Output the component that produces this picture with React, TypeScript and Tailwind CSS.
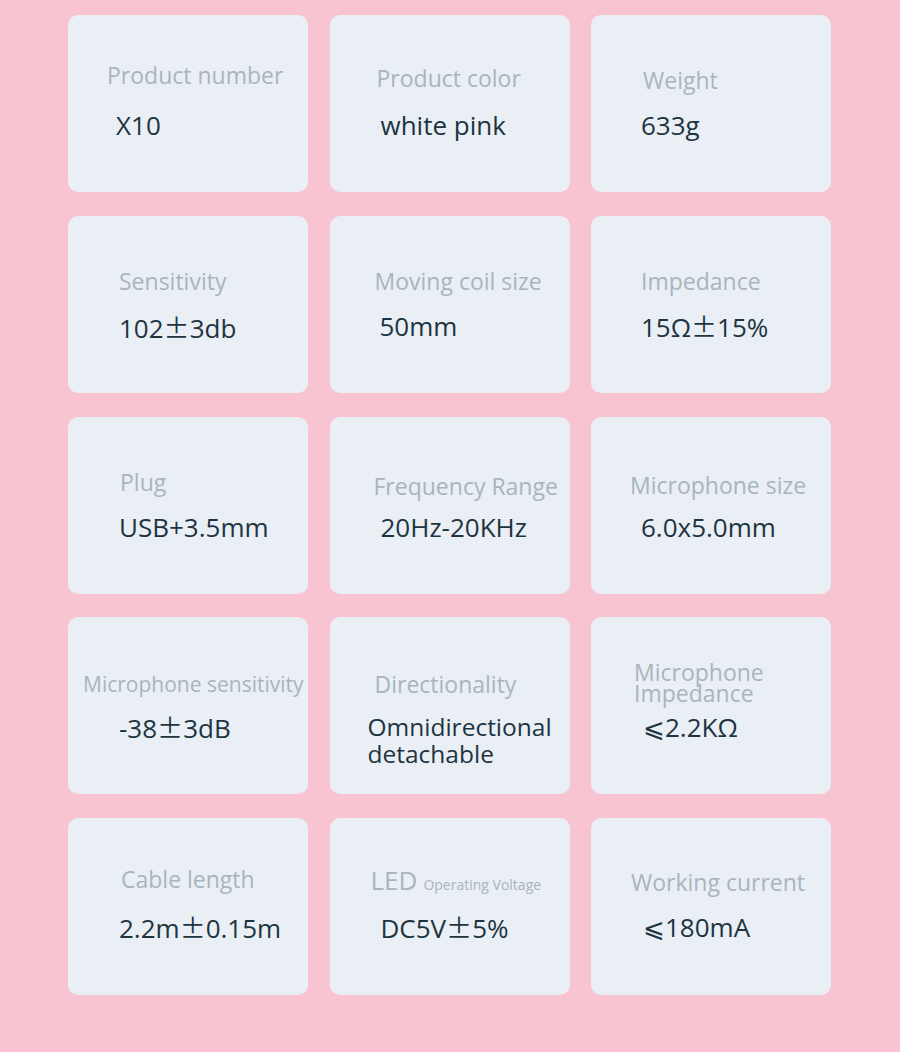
import React from 'react';

type Spec = {
  label: React.ReactNode;
  value: React.ReactNode;
  card: string;
  labelCls: string;
  valueCls: string;
};

const PM = () => <span className="font-['Noto_Sans_CJK_SC',sans-serif] font-normal">±</span>;

const L = 'text-[23px] leading-[26px]';
const V = 'leading-[30px]';

const specs: Spec[] = [
  { label: 'Product number', value: 'X10', card: 'pt-[47px] pl-[39px]', labelCls: L, valueCls: `${V} mt-[22px] ml-[9px]` },
  { label: 'Product color', value: 'white pink', card: 'pt-[50px] pl-[47px]', labelCls: L, valueCls: `${V} mt-[19px] ml-[4px]` },
  { label: 'Weight', value: '633g', card: 'pt-[52px] pl-[52px]', labelCls: L, valueCls: `${V} mt-[17px] ml-[-2px]` },

  { label: 'Sensitivity', value: <>102<PM />3db</>, card: 'pt-[52px] pl-[51px]', labelCls: L, valueCls: `${V} mt-[18px] ml-0` },
  { label: 'Moving coil size', value: '50mm', card: 'pt-[52px] pl-[45px]', labelCls: L, valueCls: `${V} mt-[17px] ml-[5px]` },
  { label: 'Impedance', value: <>15Ω<PM />15%</>, card: 'pt-[52px] pl-[50px]', labelCls: L, valueCls: `${V} mt-[17px] ml-0` },

  { label: 'Plug', value: 'USB+3.5mm', card: 'pt-[52px] pl-[52px]', labelCls: L, valueCls: `${V} mt-[17px] ml-[-1px]` },
  { label: 'Frequency Range', value: '20Hz-20KHz', card: 'pt-[56px] pl-[44px]', labelCls: L, valueCls: `${V} mt-[13px] ml-[7px]` },
  { label: 'Microphone size', value: '6.0x5.0mm', card: 'pt-[55px] pl-[39px]', labelCls: L, valueCls: `${V} mt-[14px] ml-[11px]` },

  { label: 'Microphone sensitivity', value: <>-38<PM />3dB</>, card: 'pt-[54px] pl-[15px]', labelCls: 'text-[21px] leading-[26px]', valueCls: `${V} mt-[15px] ml-[36px]` },
  {
    label: 'Directionality',
    value: <>Omnidirectional<br />detachable</>,
    card: 'pt-[54px] pl-[45px]',
    labelCls: L,
    valueCls: 'leading-[27px] !text-[24.5px] mt-[16px] ml-[-7px]',
  },
  {
    label: <>Microphone<br />Impedance</>,
    value: '⩽2.2KΩ',
    card: 'pt-[45px] pl-[43px]',
    labelCls: 'text-[23px] leading-[21px]',
    valueCls: `${V} mt-[8px] ml-[9px]`,
  },

  { label: 'Cable length', value: <>2.2m<PM />0.15m</>, card: 'pt-[48px] pl-[53px]', labelCls: L, valueCls: `${V} mt-[20px] ml-[-2px]` },
  {
    label: (
      <>
        <span className="text-[26px]">LED</span>
        <span className="ml-[6px] text-[14px]">Operating Voltage</span>
      </>
    ),
    value: <>DC5V<PM />5%</>,
    card: 'pt-[49px] pl-[41px]',
    labelCls: 'leading-[26px] h-[26px]',
    valueCls: `${V} mt-[19px] ml-[10px]`,
  },
  { label: 'Working current', value: '⩽180mA', card: 'pt-[51px] pl-[40px]', labelCls: L, valueCls: `${V} mt-[17px] ml-[12px]` },
];

export default function App() {
  return (
    <div className="w-[900px] h-[1052px] bg-[#f8c4d1] pt-[15px] pl-[68px] font-['Open_Sans','Noto_Sans',sans-serif]">
      <div className="grid grid-cols-[240px_240px_240px] auto-rows-[177px] gap-x-[21.5px] gap-y-[23.75px]">
        {specs.map((s, i) => (
          <div key={i} className={`flex flex-col items-start rounded-[10px] bg-[#e9eff5] ${s.card}`}>
            <div className={`text-[#a9b5bc] whitespace-nowrap ${s.labelCls}`}>{s.label}</div>
            <div className={`text-[26px] font-medium text-[#1e3441] whitespace-nowrap ${s.valueCls}`}>{s.value}</div>
          </div>
        ))}
      </div>
    </div>
  );
}
